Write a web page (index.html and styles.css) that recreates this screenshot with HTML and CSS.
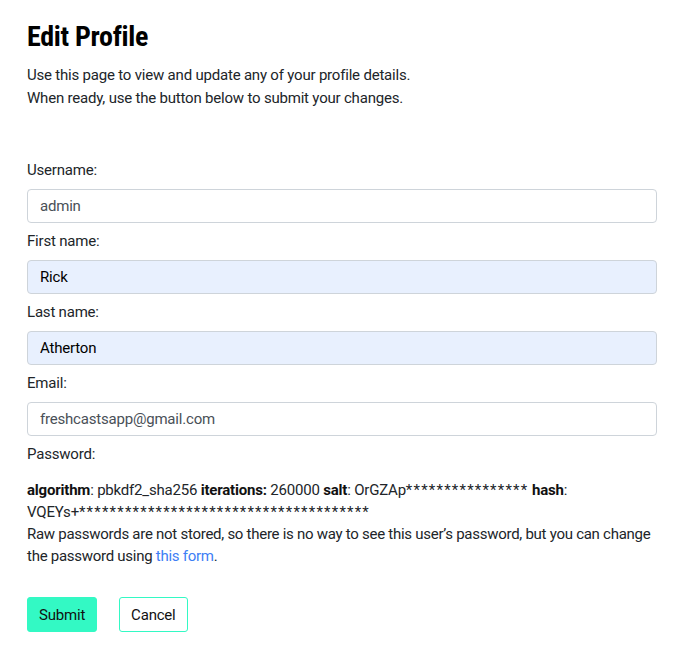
FILE: index.html
```html
<!DOCTYPE html>
<html lang="en">
<head>
<meta charset="utf-8">
<title>Edit Profile</title>
<link rel="stylesheet" href="styles.css">
</head>
<body>
<main class="page">
  <h1 class="title">Edit Profile</h1>
  <p class="intro">Use this page to view and update any of your profile details.<br>When ready, use the button below to submit your changes.</p>
  <form class="form">
    <div class="field">
      <label class="label" for="username">Username:</label>
      <input class="input" id="username" type="text" value="admin">
    </div>
    <div class="field">
      <label class="label" for="first">First name:</label>
      <input class="input input-filled" id="first" type="text" value="Rick">
    </div>
    <div class="field">
      <label class="label" for="last">Last name:</label>
      <input class="input input-filled" id="last" type="text" value="Atherton">
    </div>
    <div class="field">
      <label class="label" for="email">Email:</label>
      <input class="input" id="email" type="text" value="freshcastsapp@gmail.com">
    </div>
    <div class="field field-password">
      <label class="label">Password:</label>
      <div class="pw-info">
        <div class="hash-line"><strong>algorithm</strong>: pbkdf2_sha256 <strong>iterations:</strong> 260000 <strong>salt</strong>: OrGZAp<span class="mask">****************</span> <strong>hash</strong>: VQEYs+<span class="mask">**************************************</span></div>
        <div class="help">Raw passwords are not stored, so there is no way to see this user’s password, but you can change the password using <a class="link" href="#">this form</a>.</div>
      </div>
    </div>
    <div class="actions">
      <button class="btn btn-primary" type="button">Submit</button>
      <button class="btn btn-outline" type="button">Cancel</button>
    </div>
  </form>
</main>
</body>
</html>
```

FILE: styles.css
```css
* { box-sizing: border-box; }

html, body {
  margin: 0;
  padding: 0;
  background: #ffffff;
}

body {
  font-family: Roboto, "Liberation Sans", Arial, sans-serif;
  font-size: 15px;
  line-height: 1.5;
  letter-spacing: -0.2px;
  color: #212529;
}

.page {
  padding: 20px 29px 0 27px;
}

.title {
  margin: 0;
  font-size: 28px;
  font-weight: 700;
  font-stretch: 82%;
  letter-spacing: -0.3px;
  line-height: 34px;
  color: #000;
}

.intro {
  margin: 10px 0 0 0;
  line-height: 23px;
}

.form {
  margin-top: 49px;
  display: flex;
  flex-direction: column;
}

.field {
  display: flex;
  flex-direction: column;
  margin-bottom: 7px;
}

.label {
  line-height: 22px;
  margin-bottom: 8px;
}

.input {
  display: block;
  width: 100%;
  height: 34px;
  padding: 0 12px;
  font-family: inherit;
  font-size: 15px;
  letter-spacing: -0.2px;
  color: #495057;
  background: #fff;
  border: 1px solid #ced4da;
  border-radius: 4px;
  outline: none;
}

.input-filled {
  background: #e8f0fe;
  color: #000;
}

.field-password .label {
  margin-bottom: 14px;
}

.pw-info {
  line-height: 22px;
}

.hash-line strong {
  color: #111;
}

.mask {
  letter-spacing: 1.2px;
}

.help {
  letter-spacing: -0.27px;
}

.link {
  color: #3d7ef5;
  text-decoration: none;
}

.actions {
  display: flex;
  gap: 22px;
  margin-top: 23px;
}

.btn {
  height: 35px;
  padding: 0 11px;
  font-family: inherit;
  font-size: 15px;
  letter-spacing: -0.2px;
  color: #111;
  border-radius: 3px;
  cursor: pointer;
}

.btn-primary {
  background: #33f9c4;
  border: 1px solid #33f9c4;
}

.btn-outline {
  background: #fff;
  border: 1px solid #33f9c4;
}
```
